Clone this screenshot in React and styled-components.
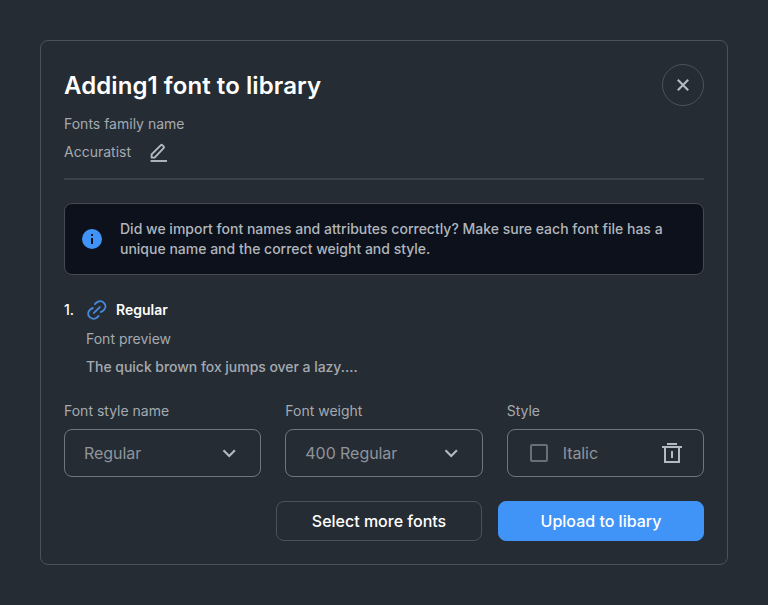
import React from "react";
import styled, { createGlobalStyle } from "styled-components";

const GlobalStyle = createGlobalStyle`
  *, *::before, *::after { box-sizing: border-box; }
  body {
    margin: 0;
    background: #262c33;
    font-family: Inter, "Liberation Sans", sans-serif;
  }
  button { font-family: inherit; cursor: pointer; }
`;

const Page = styled.main`
  min-height: 605px;
  padding: 40px;
  background: #262c33;
`;

const Dialog = styled.section`
  display: flex;
  flex-direction: column;
  width: 688px;
  height: 525px;
  padding: 23px;
  border: 1px solid #4c5259;
  border-radius: 8px;
`;

const Header = styled.header`
  display: flex;
  align-items: center;
  justify-content: space-between;
  height: 42px;
`;

const Title = styled.h1`
  margin: 0;
  padding-top: 2px;
  font-size: 24px;
  line-height: 32px;
  font-weight: 600;
  letter-spacing: 0.08px;
  color: #fff;
`;

const CloseButton = styled.button`
  display: grid;
  place-items: center;
  width: 42px;
  height: 42px;
  padding: 0;
  border: 1px solid #4c5259;
  border-radius: 50%;
  background: transparent;
  color: #b3bac1;
`;

const Text = styled.p`
  margin: ${({ $top = 0 }) => $top}px 0 0;
  font-size: 14px;
  line-height: 20px;
  font-weight: ${({ $weight = 400 }) => $weight};
  letter-spacing: ${({ $tracking = 0 }) => $tracking}px;
  color: #a4aab1;
  white-space: nowrap;
`;

const FamilyRow = styled.div`
  display: flex;
  align-items: center;
  gap: 18px;
  height: 20px;
  margin-top: 8px;
`;

const IconButton = styled.button`
  display: grid;
  place-items: center;
  padding: ${({ $drop = 0 }) => $drop}px 0 0;
  border: 0;
  background: transparent;
  color: #b3bac1;
`;

const Divider = styled.hr`
  width: 100%;
  height: 2px;
  margin: 16px 0 23px;
  border: 0;
  background: #3b4148;
`;

const Notice = styled.div`
  display: flex;
  align-items: center;
  gap: 18px;
  height: 72px;
  padding: 0 17px;
  border: 1px solid #434a52;
  border-radius: 8px;
  background: #0c111b;
`;

const NoticeText = styled.p`
  margin: 0;
  width: 550px;
  font-size: 14px;
  line-height: 20px;
  font-weight: 500;
  color: #b1b6bd;
`;

const FontRow = styled.div`
  display: flex;
  align-items: center;
  height: 20px;
  margin-top: 25px;
`;

const FontIndex = styled.span`
  width: 22px;
  font-size: 14px;
  line-height: 20px;
  font-weight: 500;
  color: #fff;
`;

const FontName = styled.span`
  margin-left: 8px;
  font-size: 14px;
  line-height: 20px;
  font-weight: 600;
  color: #fff;
`;

const Preview = styled.div`
  padding-left: 22px;
`;

const Fields = styled.div`
  display: grid;
  grid-template-columns: repeat(3, 1fr);
  gap: 24px;
  margin-top: 24px;
`;

const Control = styled.div`
  display: flex;
  align-items: center;
  height: 48px;
  margin-top: 8px;
  padding: 0 ${({ $right = 23 }) => $right}px 0 ${({ $left = 19 }) => $left}px;
  border: 1px solid #70767e;
  border-radius: 8px;
  color: #b3bac1;
`;

const ControlText = styled.span`
  flex: 1;
  font-size: 16px;
  line-height: 24px;
  letter-spacing: -0.06px;
  color: #8e949c;
`;

const Checkbox = styled.span`
  width: 18px;
  height: 18px;
  margin-right: 15px;
  border: 2px solid #686f78;
  border-radius: 2px;
`;

const Actions = styled.footer`
  display: flex;
  justify-content: flex-end;
  gap: 16px;
  margin-top: 24px;
`;

const ActionButton = styled.button`
  width: 206px;
  height: 40px;
  padding: 0;
  border: 1px solid ${({ $primary }) => ($primary ? "#4094f7" : "#4c5259")};
  border-radius: 8px;
  background: ${({ $primary }) => ($primary ? "#4094f7" : "transparent")};
  font-size: 16px;
  line-height: 24px;
  font-weight: 500;
  color: #fff;
`;

const Icon = styled.svg`
  display: block;
  flex: none;
`;

const CloseIcon = () => (
  <Icon width="12" height="12" viewBox="0 0 12 12" fill="none" stroke="currentColor" strokeWidth="2.1">
    <path d="M.8.8 11.2 11.2M11.2.8.8 11.2" />
  </Icon>
);

const PencilIcon = () => (
  <Icon width="20" height="20" viewBox="0 0 20 20" fill="none" stroke="currentColor">
    <path d="M2.6 14.6V11.4L11.7 2.3Q12.6 1.4 13.5 2.3L14.6 3.4Q15.5 4.3 14.6 5.2L5.6 14.6Z" strokeWidth="1.9" strokeLinejoin="round" />
    <path d="M1.6 18H18" strokeWidth="1.9" />
  </Icon>
);

const InfoIcon = () => (
  <Icon width="20" height="20" viewBox="0 0 20 20">
    <circle cx="10" cy="10" r="10" fill="#4094f7" />
    <path d="M9 5h2v2H9zM9 9h2v6H9z" fill="#0c111b" />
  </Icon>
);

const LinkIcon = () => (
  <Icon width="22" height="20" viewBox="0 0 22 20" fill="none" stroke="#4789da" strokeWidth="1.9" strokeLinecap="round">
    <path d="M7.9 12.9 13.8 7.1" />
    <path d="M8.9 4.1 10.3 2.8C12.6.7 15.9.8 17.9 2.8S20 7.7 18 9.8C17.1 10.8 16.2 11.6 14.8 12" />
    <path d="M12.7 15.9 11.3 17.2C9 19.3 5.7 19.2 3.7 17.2S1.6 12.3 3.6 10.2C4.5 9.2 5.4 8.4 6.8 8" />
  </Icon>
);

const ChevronIcon = () => (
  <Icon width="16" height="16" viewBox="0 0 16 16" fill="none" stroke="currentColor" strokeWidth="2.1">
    <path d="M2.5 5.2 8.2 10.9 13.9 5.2" />
  </Icon>
);

const TrashIcon = () => (
  <Icon width="20" height="20" viewBox="0 0 20 20" fill="currentColor">
    <path d="M5 0h10v2H5zM0 3h20v2h-2v15H2V5H0zM4 5v13h12V5zM9 8h2v7H9z" fillRule="evenodd" />
  </Icon>
);

const SelectField = ({ label, value }) => (
  <div>
    <Text>{label}</Text>
    <Control>
      <ControlText>{value}</ControlText>
      <ChevronIcon />
    </Control>
  </div>
);

export default function App() {
  return (
    <>
      <GlobalStyle />
      <Page>
        <Dialog>
          <Header>
            <Title>Adding1 font to library</Title>
            <CloseButton aria-label="Close">
              <CloseIcon />
            </CloseButton>
          </Header>
          <Text $top={8}>Fonts family name</Text>
          <FamilyRow>
            <Text>Accuratist</Text>
            <IconButton $drop={2} aria-label="Edit family name">
              <PencilIcon />
            </IconButton>
          </FamilyRow>
          <Divider />
          <Notice>
            <InfoIcon />
            <NoticeText>
              Did we import font names and attributes correctly? Make sure each font file has a
              unique name and the correct weight and style.
            </NoticeText>
          </Notice>
          <FontRow>
            <FontIndex>1.</FontIndex>
            <LinkIcon />
            <FontName>Regular</FontName>
          </FontRow>
          <Preview>
            <Text $top={9}>Font preview</Text>
            <Text $top={8} $weight={500} $tracking={-0.04}>The quick brown fox jumps over a lazy....</Text>
          </Preview>
          <Fields>
            <SelectField label="Font style name" value="Regular" />
            <SelectField label="Font weight" value="400 Regular" />
            <div>
              <Text>Style</Text>
              <Control $left={22} $right={21}>
                <Checkbox role="checkbox" aria-checked="false" aria-label="Italic" />
                <ControlText>Italic</ControlText>
                <IconButton aria-label="Delete font">
                  <TrashIcon />
                </IconButton>
              </Control>
            </div>
          </Fields>
          <Actions>
            <ActionButton>Select more fonts</ActionButton>
            <ActionButton $primary>Upload to libary</ActionButton>
          </Actions>
        </Dialog>
      </Page>
    </>
  );
}
